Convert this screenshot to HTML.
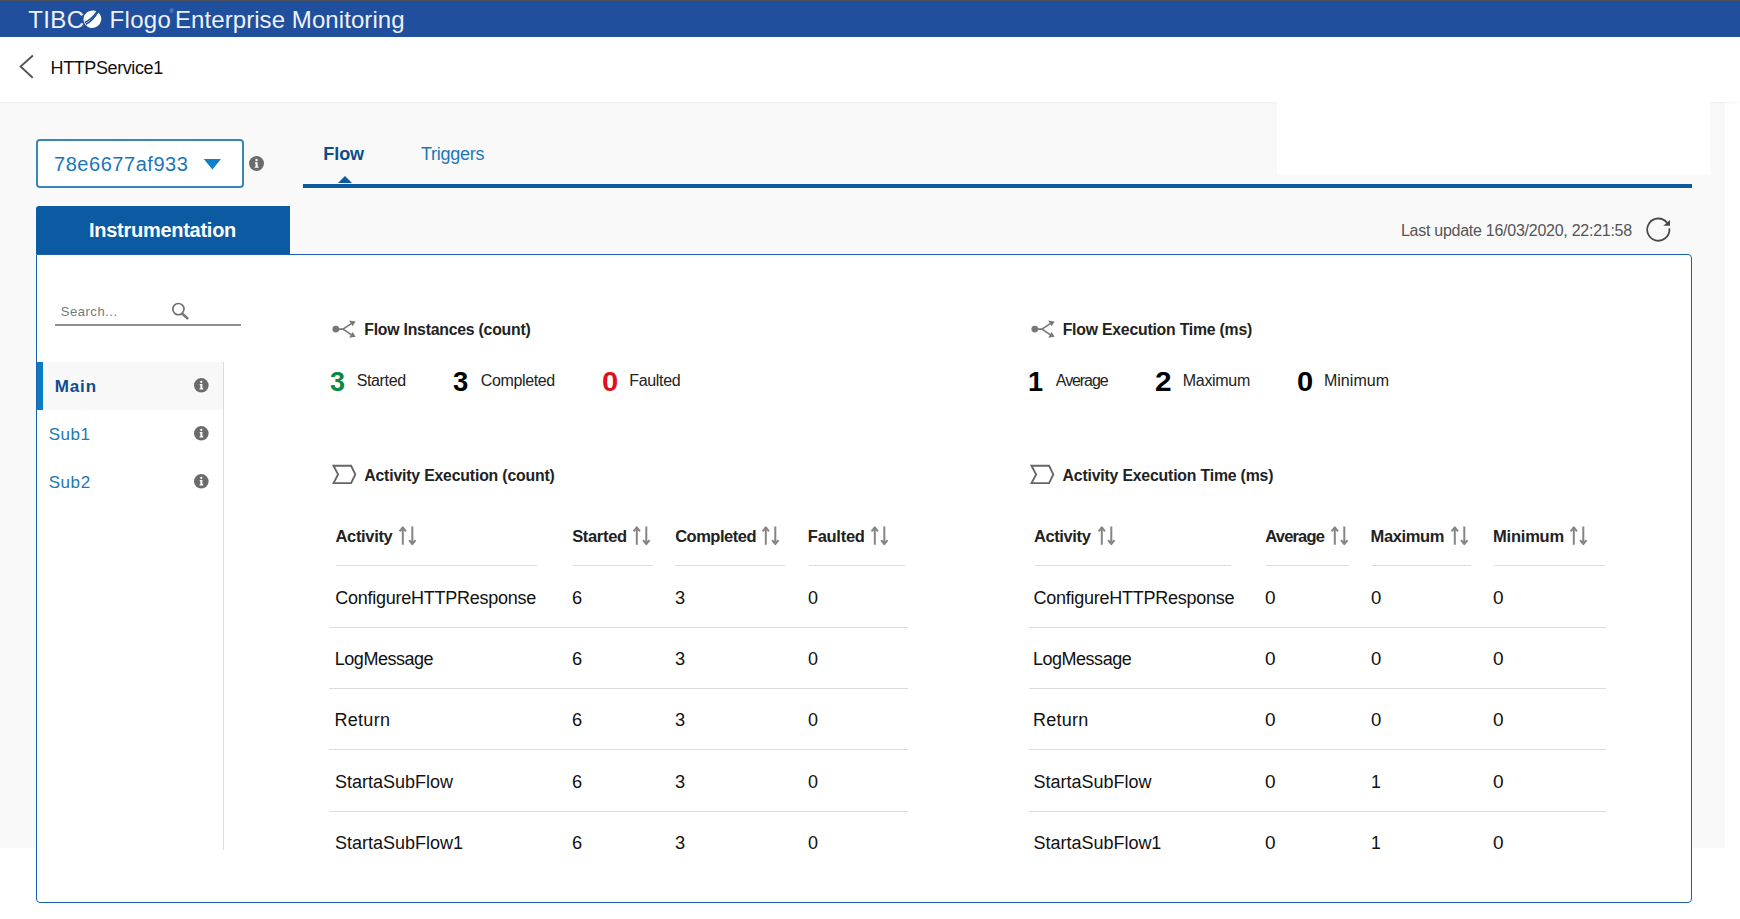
<!DOCTYPE html>
<html lang="en">
<head>
<meta charset="utf-8">
<title>TIBCO Flogo Enterprise Monitoring</title>
<style>
*{box-sizing:border-box;margin:0;padding:0}
html,body{width:1740px;height:919px;overflow:hidden;background:#f9f9f9;font-family:"Liberation Sans",sans-serif;color:#1a1a1a}
.abs,.t{position:absolute;white-space:nowrap}
.t{line-height:1;transform-origin:0 50%}
#topbar{left:0;top:0;width:1740px;height:37px;background:#1f4f9d;border-top:1px solid #4a4f5a}
#hdr{left:0;top:37px;width:1740px;height:65px;background:#fff;box-shadow:0 1px 2px rgba(0,0,0,.05)}
#patch1{left:1277px;top:102px;width:433px;height:73px;background:#fff}
#patch2{left:1725px;top:102px;width:15px;height:817px;background:#fff}
#patch3{left:0;top:848px;width:1740px;height:71px;background:#fff}
#panel{left:36px;top:254px;width:1656px;height:649px;background:#fff;border:1px solid #1b62a8;border-radius:0 4px 4px 4px}
#instr{left:36px;top:206px;width:254px;height:48px;background:#0b5aa2;border-radius:3px 0 0 0}
#dd{left:36px;top:139px;width:208px;height:49px;background:#fff;border:2px solid #3b86b6;border-radius:4px}
#tabline{left:302.5px;top:183.5px;width:1389.4px;height:4px;background:#0d5aa1}
#tabarrow{left:337.7px;top:176.2px;width:0;height:0;border-left:7px solid transparent;border-right:7px solid transparent;border-bottom:7.6px solid #0d5aa1}
#selbg{left:37px;top:362px;width:186px;height:47.5px;background:#f8f8f8}
#selbar{left:37px;top:362px;width:5.7px;height:47.5px;background:#0a7cc6}
#vdiv{left:223px;top:362px;width:1px;height:488px;background:#dcdcdc}
#sline{left:55px;top:324px;width:186px;height:2px;background:#8f8f8f}
.hl{position:absolute;height:1px;background:#dcdcdc}
.b{font-weight:bold}
</style>
</head>
<body>
<div class="abs" id="patch2"></div>
<div class="abs" id="patch3"></div>
<div class="abs" id="topbar"></div>
<div class="abs" id="hdr"></div>
<div class="abs" id="patch1"></div>
<div class="abs" id="panel"></div>
<div class="abs" id="instr"></div>
<div class="abs" id="dd"></div>
<div class="abs" id="tabline"></div>
<div class="abs" id="tabarrow"></div>
<div class="abs" id="selbg"></div>
<div class="abs" id="selbar"></div>
<div class="abs" id="vdiv"></div>
<div class="abs" id="sline"></div>
<div class="hl" style="left:336.2px;top:564.6px;width:201.0px;background:#dcdcdc"></div>
<div class="hl" style="left:572.8px;top:564.6px;width:80.6px;background:#dcdcdc"></div>
<div class="hl" style="left:675.2px;top:564.6px;width:110.3px;background:#dcdcdc"></div>
<div class="hl" style="left:808.6px;top:564.6px;width:96.6px;background:#dcdcdc"></div>
<div class="hl" style="left:1034.5px;top:564.6px;width:196.5px;background:#dcdcdc"></div>
<div class="hl" style="left:1265.9px;top:564.6px;width:83.4px;background:#dcdcdc"></div>
<div class="hl" style="left:1371.7px;top:564.6px;width:99.0px;background:#dcdcdc"></div>
<div class="hl" style="left:1494.1px;top:564.6px;width:111.1px;background:#dcdcdc"></div>
<div class="hl" style="left:329.3px;top:627.0px;width:578.7px;background:#dcdcdc"></div>
<div class="hl" style="left:1028.6px;top:627.0px;width:577.6px;background:#dcdcdc"></div>
<div class="hl" style="left:329.3px;top:688.0px;width:578.7px;background:#dcdcdc"></div>
<div class="hl" style="left:1028.6px;top:688.0px;width:577.6px;background:#dcdcdc"></div>
<div class="hl" style="left:329.3px;top:749.0px;width:578.7px;background:#dcdcdc"></div>
<div class="hl" style="left:1028.6px;top:749.0px;width:577.6px;background:#dcdcdc"></div>
<div class="hl" style="left:329.3px;top:811.0px;width:578.7px;background:#dcdcdc"></div>
<div class="hl" style="left:1028.6px;top:811.0px;width:577.6px;background:#dcdcdc"></div>
<svg class="abs" style="left:399.3px;top:525.8px" width="18" height="20" viewBox="0 0 18 20" fill="none" stroke="#858585" stroke-width="2" stroke-linejoin="round"><path d="M3.8 18.8V1.6M0.6 5.4L3.8 1.4L7 5.4M13.3 0.6V18M10.1 14.2L13.3 18.2L16.5 14.2"/></svg>
<svg class="abs" style="left:633.1px;top:525.8px" width="18" height="20" viewBox="0 0 18 20" fill="none" stroke="#858585" stroke-width="2" stroke-linejoin="round"><path d="M3.8 18.8V1.6M0.6 5.4L3.8 1.4L7 5.4M13.3 0.6V18M10.1 14.2L13.3 18.2L16.5 14.2"/></svg>
<svg class="abs" style="left:762.0px;top:525.8px" width="18" height="20" viewBox="0 0 18 20" fill="none" stroke="#858585" stroke-width="2" stroke-linejoin="round"><path d="M3.8 18.8V1.6M0.6 5.4L3.8 1.4L7 5.4M13.3 0.6V18M10.1 14.2L13.3 18.2L16.5 14.2"/></svg>
<svg class="abs" style="left:870.7px;top:525.8px" width="18" height="20" viewBox="0 0 18 20" fill="none" stroke="#858585" stroke-width="2" stroke-linejoin="round"><path d="M3.8 18.8V1.6M0.6 5.4L3.8 1.4L7 5.4M13.3 0.6V18M10.1 14.2L13.3 18.2L16.5 14.2"/></svg>
<svg class="abs" style="left:1097.6px;top:525.8px" width="18" height="20" viewBox="0 0 18 20" fill="none" stroke="#858585" stroke-width="2" stroke-linejoin="round"><path d="M3.8 18.8V1.6M0.6 5.4L3.8 1.4L7 5.4M13.3 0.6V18M10.1 14.2L13.3 18.2L16.5 14.2"/></svg>
<svg class="abs" style="left:1331.2px;top:525.8px" width="18" height="20" viewBox="0 0 18 20" fill="none" stroke="#858585" stroke-width="2" stroke-linejoin="round"><path d="M3.8 18.8V1.6M0.6 5.4L3.8 1.4L7 5.4M13.3 0.6V18M10.1 14.2L13.3 18.2L16.5 14.2"/></svg>
<svg class="abs" style="left:1451.0px;top:525.8px" width="18" height="20" viewBox="0 0 18 20" fill="none" stroke="#858585" stroke-width="2" stroke-linejoin="round"><path d="M3.8 18.8V1.6M0.6 5.4L3.8 1.4L7 5.4M13.3 0.6V18M10.1 14.2L13.3 18.2L16.5 14.2"/></svg>
<svg class="abs" style="left:1570.0px;top:525.8px" width="18" height="20" viewBox="0 0 18 20" fill="none" stroke="#858585" stroke-width="2" stroke-linejoin="round"><path d="M3.8 18.8V1.6M0.6 5.4L3.8 1.4L7 5.4M13.3 0.6V18M10.1 14.2L13.3 18.2L16.5 14.2"/></svg>
<svg class="abs" style="left:332.0px;top:320px" width="25" height="19" viewBox="0 0 25 19"><circle cx="3.8" cy="9.1" r="3.4" fill="#777"/><path d="M6.5 9.1H11L19.6 3.4M11 9.1L19.6 14.9" fill="none" stroke="#777" stroke-width="1.7" stroke-linejoin="round"/><path d="M17.2 0.6L23.6 1.6L20.6 6.2ZM17.2 17.7L23.6 16.7L20.6 12.1Z" fill="#777"/></svg>
<svg class="abs" style="left:1030.9px;top:320px" width="25" height="19" viewBox="0 0 25 19"><circle cx="3.8" cy="9.1" r="3.4" fill="#777"/><path d="M6.5 9.1H11L19.6 3.4M11 9.1L19.6 14.9" fill="none" stroke="#777" stroke-width="1.7" stroke-linejoin="round"/><path d="M17.2 0.6L23.6 1.6L20.6 6.2ZM17.2 17.7L23.6 16.7L20.6 12.1Z" fill="#777"/></svg>
<svg class="abs" style="left:332.0px;top:464px" width="25" height="21" viewBox="0 0 25 21" fill="none" stroke="#666" stroke-width="1.9" stroke-linejoin="miter"><path d="M1.5 1.8H19.1L23.3 10.4L19.1 19.1H1.5L6.1 10.4Z"/></svg>
<svg class="abs" style="left:1030.3px;top:464px" width="25" height="21" viewBox="0 0 25 21" fill="none" stroke="#666" stroke-width="1.9" stroke-linejoin="miter"><path d="M1.5 1.8H19.1L23.3 10.4L19.1 19.1H1.5L6.1 10.4Z"/></svg>
<svg class="abs" style="left:249.1px;top:156.1px" width="15" height="15" viewBox="0 0 16 16"><circle cx="8" cy="8" r="8" fill="#6b6b6b"/><path d="M6.3 6.6H9.2V11.3H10.1V12.6H6.1V11.3H7V7.9H6.3Z" fill="#fff"/><circle cx="8" cy="4.3" r="1.25" fill="#fff"/></svg>
<svg class="abs" style="left:194.1px;top:378.4px" width="14.6" height="14.6" viewBox="0 0 16 16"><circle cx="8" cy="8" r="8" fill="#6b6b6b"/><path d="M6.3 6.6H9.2V11.3H10.1V12.6H6.1V11.3H7V7.9H6.3Z" fill="#fff"/><circle cx="8" cy="4.3" r="1.25" fill="#fff"/></svg>
<svg class="abs" style="left:194.1px;top:426.3px" width="14.6" height="14.6" viewBox="0 0 16 16"><circle cx="8" cy="8" r="8" fill="#6b6b6b"/><path d="M6.3 6.6H9.2V11.3H10.1V12.6H6.1V11.3H7V7.9H6.3Z" fill="#fff"/><circle cx="8" cy="4.3" r="1.25" fill="#fff"/></svg>
<svg class="abs" style="left:194.1px;top:474.2px" width="14.6" height="14.6" viewBox="0 0 16 16"><circle cx="8" cy="8" r="8" fill="#6b6b6b"/><path d="M6.3 6.6H9.2V11.3H10.1V12.6H6.1V11.3H7V7.9H6.3Z" fill="#fff"/><circle cx="8" cy="4.3" r="1.25" fill="#fff"/></svg>
<svg class="abs" style="left:203px;top:158px" width="19" height="12" viewBox="0 0 19 12"><path d="M0.8 1H18L9.4 11.4Z" fill="#0f80c7"/></svg>
<svg class="abs" style="left:19px;top:54px" width="16" height="26" viewBox="0 0 16 26" fill="none" stroke="#555" stroke-width="1.9" stroke-linejoin="miter"><path d="M13.9 1.5L1.6 12.5L13.7 23.8"/></svg>
<svg class="abs" style="left:1645px;top:216px" width="27" height="27" viewBox="0 0 27 27"><path d="M22.05 6.77A11.1 11.1 0 1 0 24.4 13.1" fill="none" stroke="#4a4a4a" stroke-width="1.8" stroke-linecap="round"/><path d="M25 4V9.7H18.3Z" fill="#4a4a4a"/></svg>
<svg class="abs" style="left:171px;top:302px" width="19" height="19" viewBox="0 0 19 19" fill="none" stroke-linecap="round"><circle cx="7.4" cy="7.1" r="5.6" stroke="#6e6e6e" stroke-width="1.6"/><path d="M11.3 11.7L16.4 16.2" stroke="#7a7a7a" stroke-width="2.6"/></svg>
<svg class="abs" style="left:83px;top:10px" width="19" height="19" viewBox="0 0 19 19"><text x="9.4" y="16.6" text-anchor="middle" font-family="Liberation Sans, sans-serif" font-size="21" fill="#fff">O</text><ellipse cx="9.4" cy="9.2" rx="9" ry="8.7" transform="rotate(-35 9.4 9.2)" fill="#fff"/><path d="M1.8 12.4C7 10.2 11.2 6 14.6 0.9" stroke="#1f4f9d" stroke-width="1.6" fill="none"/><path d="M2.8 14.3C7.8 12 11.9 7.2 15.1 1.7" stroke="#1f4f9d" stroke-width="1.6" fill="none"/></svg>
<div class="abs" style="left:169.3px;top:8.3px;font-size:6px;line-height:1;color:#8fb4e6">&reg;</div>
<div class="t" style="left:28.25px;top:8.03px;font-size:24px;color:#ffffff;letter-spacing:0.395px;opacity:.92;">TIBC</div>
<div class="t" style="left:109.61px;top:8.03px;font-size:24px;color:#ffffff;letter-spacing:0.290px;opacity:.92;">Flogo</div>
<div class="t" style="left:174.96px;top:8.03px;font-size:24px;color:#ffffff;letter-spacing:0.077px;opacity:.92;">Enterprise Monitoring</div>
<div class="t" style="left:50.56px;top:59.01px;font-size:18px;color:#111;letter-spacing:-0.403px;">HTTPService1</div>
<div class="t" style="left:54.04px;top:154.07px;font-size:20px;color:#1a76b8;letter-spacing:0.541px;">78e6677af933</div>
<div class="t" style="left:323.30px;top:145.06px;font-size:18px;color:#0f4d8c;letter-spacing:-0.067px;font-weight:bold;">Flow</div>
<div class="t" style="left:420.88px;top:145.06px;font-size:18px;color:#1d78b5;letter-spacing:-0.241px;">Triggers</div>
<div class="t" style="left:89.05px;top:220.07px;font-size:20px;color:#ffffff;letter-spacing:-0.277px;font-weight:bold;">Instrumentation</div>
<div class="t" style="left:1400.89px;top:223.01px;font-size:16px;color:#555;letter-spacing:-0.260px;">Last update 16/03/2020, 22:21:58</div>
<div class="t" style="left:60.72px;top:305.05px;font-size:13px;color:#777;letter-spacing:0.545px;">Search...</div>
<div class="t" style="left:54.63px;top:378.01px;font-size:17px;color:#0f4d8c;letter-spacing:0.926px;font-weight:bold;">Main</div>
<div class="t" style="left:48.78px;top:426.16px;font-size:17px;color:#1d78b5;letter-spacing:0.475px;">Sub1</div>
<div class="t" style="left:48.70px;top:474.06px;font-size:17px;color:#1d78b5;letter-spacing:0.564px;">Sub2</div>
<div class="t" style="left:364.25px;top:322.13px;font-size:15.8px;color:#222;letter-spacing:-0.221px;font-weight:bold;">Flow Instances (count)</div>
<div class="t" style="left:329.79px;top:367.12px;font-size:28.5px;color:#0a8a3a;font-weight:bold;transform:scaleX(0.946);transform-origin:0 0;">3</div>
<div class="t" style="left:356.72px;top:372.96px;font-size:16px;color:#222;letter-spacing:-0.374px;">Started</div>
<div class="t" style="left:452.92px;top:367.12px;font-size:28.5px;color:#000;font-weight:bold;transform:scaleX(0.963);transform-origin:0 0;">3</div>
<div class="t" style="left:480.71px;top:372.96px;font-size:16px;color:#222;letter-spacing:-0.357px;">Completed</div>
<div class="t" style="left:602.49px;top:367.12px;font-size:28.5px;color:#e0101f;font-weight:bold;transform:scaleX(1.025);transform-origin:0 0;">0</div>
<div class="t" style="left:629.27px;top:372.96px;font-size:16px;color:#222;letter-spacing:-0.335px;">Faulted</div>
<div class="t" style="left:364.23px;top:468.23px;font-size:15.8px;color:#222;letter-spacing:-0.171px;font-weight:bold;">Activity Execution (count)</div>
<div class="t" style="left:1062.69px;top:322.13px;font-size:15.8px;color:#222;letter-spacing:-0.219px;font-weight:bold;">Flow Execution Time (ms)</div>
<div class="t" style="left:1028.01px;top:367.12px;font-size:28.5px;color:#000;font-weight:bold;transform:scaleX(0.952);transform-origin:0 0;">1</div>
<div class="t" style="left:1055.84px;top:372.96px;font-size:16px;color:#222;letter-spacing:-1.085px;">Average</div>
<div class="t" style="left:1155.16px;top:367.12px;font-size:28.5px;color:#000;font-weight:bold;transform:scaleX(1.047);transform-origin:0 0;">2</div>
<div class="t" style="left:1182.82px;top:372.96px;font-size:16px;color:#222;letter-spacing:-0.313px;">Maximum</div>
<div class="t" style="left:1296.62px;top:367.12px;font-size:28.5px;color:#000;font-weight:bold;transform:scaleX(1.021);transform-origin:0 0;">0</div>
<div class="t" style="left:1323.89px;top:372.96px;font-size:16px;color:#222;letter-spacing:0.054px;">Minimum</div>
<div class="t" style="left:1062.56px;top:468.23px;font-size:15.8px;color:#222;letter-spacing:-0.177px;font-weight:bold;">Activity Execution Time (ms)</div>
<div class="t" style="left:335.54px;top:528.23px;font-size:16.5px;color:#222;letter-spacing:-0.347px;font-weight:bold;">Activity</div>
<div class="t" style="left:572.13px;top:528.23px;font-size:16.5px;color:#222;letter-spacing:-0.309px;font-weight:bold;">Started</div>
<div class="t" style="left:675.15px;top:528.23px;font-size:16.5px;color:#222;letter-spacing:-0.488px;font-weight:bold;">Completed</div>
<div class="t" style="left:807.83px;top:528.23px;font-size:16.5px;color:#222;letter-spacing:-0.264px;font-weight:bold;">Faulted</div>
<div class="t" style="left:1033.91px;top:528.23px;font-size:16.5px;color:#222;letter-spacing:-0.380px;font-weight:bold;">Activity</div>
<div class="t" style="left:1265.29px;top:528.23px;font-size:16.5px;color:#222;letter-spacing:-0.809px;font-weight:bold;">Average</div>
<div class="t" style="left:1370.60px;top:528.23px;font-size:16.5px;color:#222;letter-spacing:-0.390px;font-weight:bold;">Maximum</div>
<div class="t" style="left:1492.98px;top:528.23px;font-size:16.5px;color:#222;letter-spacing:-0.208px;font-weight:bold;">Minimum</div>
<div class="t" style="left:335.17px;top:589.16px;font-size:18px;color:#111;letter-spacing:-0.251px;">ConfigureHTTPResponse</div>
<div class="t" style="left:1033.49px;top:589.16px;font-size:18px;color:#111;letter-spacing:-0.250px;">ConfigureHTTPResponse</div>
<div class="t" style="left:571.50px;top:589.16px;font-size:18px;color:#111;transform:scaleX(1.014);transform-origin:0 0;">6</div>
<div class="t" style="left:675.22px;top:589.16px;font-size:18px;color:#111;transform:scaleX(1.016);transform-origin:0 0;">3</div>
<div class="t" style="left:808.18px;top:589.16px;font-size:18px;color:#111;transform:scaleX(0.998);transform-origin:0 0;">0</div>
<div class="t" style="left:1265.18px;top:589.16px;font-size:18px;color:#111;transform:scaleX(1.055);transform-origin:0 0;">0</div>
<div class="t" style="left:1371.15px;top:589.16px;font-size:18px;color:#111;transform:scaleX(1.026);transform-origin:0 0;">0</div>
<div class="t" style="left:1493.47px;top:589.16px;font-size:18px;color:#111;transform:scaleX(1.056);transform-origin:0 0;">0</div>
<div class="t" style="left:334.79px;top:650.21px;font-size:18px;color:#111;letter-spacing:-0.469px;">LogMessage</div>
<div class="t" style="left:1032.95px;top:650.21px;font-size:18px;color:#111;letter-spacing:-0.476px;">LogMessage</div>
<div class="t" style="left:571.50px;top:650.21px;font-size:18px;color:#111;transform:scaleX(1.014);transform-origin:0 0;">6</div>
<div class="t" style="left:675.22px;top:650.21px;font-size:18px;color:#111;transform:scaleX(1.016);transform-origin:0 0;">3</div>
<div class="t" style="left:808.18px;top:650.21px;font-size:18px;color:#111;transform:scaleX(0.998);transform-origin:0 0;">0</div>
<div class="t" style="left:1265.18px;top:650.21px;font-size:18px;color:#111;transform:scaleX(1.055);transform-origin:0 0;">0</div>
<div class="t" style="left:1371.15px;top:650.21px;font-size:18px;color:#111;transform:scaleX(1.026);transform-origin:0 0;">0</div>
<div class="t" style="left:1493.47px;top:650.21px;font-size:18px;color:#111;transform:scaleX(1.056);transform-origin:0 0;">0</div>
<div class="t" style="left:334.62px;top:711.01px;font-size:18px;color:#111;letter-spacing:0.250px;">Return</div>
<div class="t" style="left:1032.94px;top:711.01px;font-size:18px;color:#111;letter-spacing:0.261px;">Return</div>
<div class="t" style="left:571.50px;top:711.01px;font-size:18px;color:#111;transform:scaleX(1.014);transform-origin:0 0;">6</div>
<div class="t" style="left:675.22px;top:711.01px;font-size:18px;color:#111;transform:scaleX(1.016);transform-origin:0 0;">3</div>
<div class="t" style="left:808.18px;top:711.01px;font-size:18px;color:#111;transform:scaleX(0.998);transform-origin:0 0;">0</div>
<div class="t" style="left:1265.18px;top:711.01px;font-size:18px;color:#111;transform:scaleX(1.055);transform-origin:0 0;">0</div>
<div class="t" style="left:1371.15px;top:711.01px;font-size:18px;color:#111;transform:scaleX(1.026);transform-origin:0 0;">0</div>
<div class="t" style="left:1493.47px;top:711.01px;font-size:18px;color:#111;transform:scaleX(1.056);transform-origin:0 0;">0</div>
<div class="t" style="left:335.00px;top:773.06px;font-size:18px;color:#111;letter-spacing:-0.006px;">StartaSubFlow</div>
<div class="t" style="left:1033.62px;top:773.06px;font-size:18px;color:#111;letter-spacing:-0.008px;">StartaSubFlow</div>
<div class="t" style="left:571.50px;top:773.06px;font-size:18px;color:#111;transform:scaleX(1.014);transform-origin:0 0;">6</div>
<div class="t" style="left:675.22px;top:773.06px;font-size:18px;color:#111;transform:scaleX(1.016);transform-origin:0 0;">3</div>
<div class="t" style="left:808.18px;top:773.06px;font-size:18px;color:#111;transform:scaleX(0.998);transform-origin:0 0;">0</div>
<div class="t" style="left:1265.18px;top:773.06px;font-size:18px;color:#111;transform:scaleX(1.055);transform-origin:0 0;">0</div>
<div class="t" style="left:1371.14px;top:773.06px;font-size:18px;color:#111;transform:scaleX(0.980);transform-origin:0 0;">1</div>
<div class="t" style="left:1493.47px;top:773.06px;font-size:18px;color:#111;transform:scaleX(1.056);transform-origin:0 0;">0</div>
<div class="t" style="left:335.03px;top:834.11px;font-size:18px;color:#111;letter-spacing:-0.005px;">StartaSubFlow1</div>
<div class="t" style="left:1033.62px;top:834.11px;font-size:18px;color:#111;letter-spacing:-0.024px;">StartaSubFlow1</div>
<div class="t" style="left:571.50px;top:834.11px;font-size:18px;color:#111;transform:scaleX(1.014);transform-origin:0 0;">6</div>
<div class="t" style="left:675.22px;top:834.11px;font-size:18px;color:#111;transform:scaleX(1.016);transform-origin:0 0;">3</div>
<div class="t" style="left:808.18px;top:834.11px;font-size:18px;color:#111;transform:scaleX(0.998);transform-origin:0 0;">0</div>
<div class="t" style="left:1265.18px;top:834.11px;font-size:18px;color:#111;transform:scaleX(1.055);transform-origin:0 0;">0</div>
<div class="t" style="left:1371.14px;top:834.11px;font-size:18px;color:#111;transform:scaleX(0.980);transform-origin:0 0;">1</div>
<div class="t" style="left:1493.47px;top:834.11px;font-size:18px;color:#111;transform:scaleX(1.056);transform-origin:0 0;">0</div>
</body>
</html>
